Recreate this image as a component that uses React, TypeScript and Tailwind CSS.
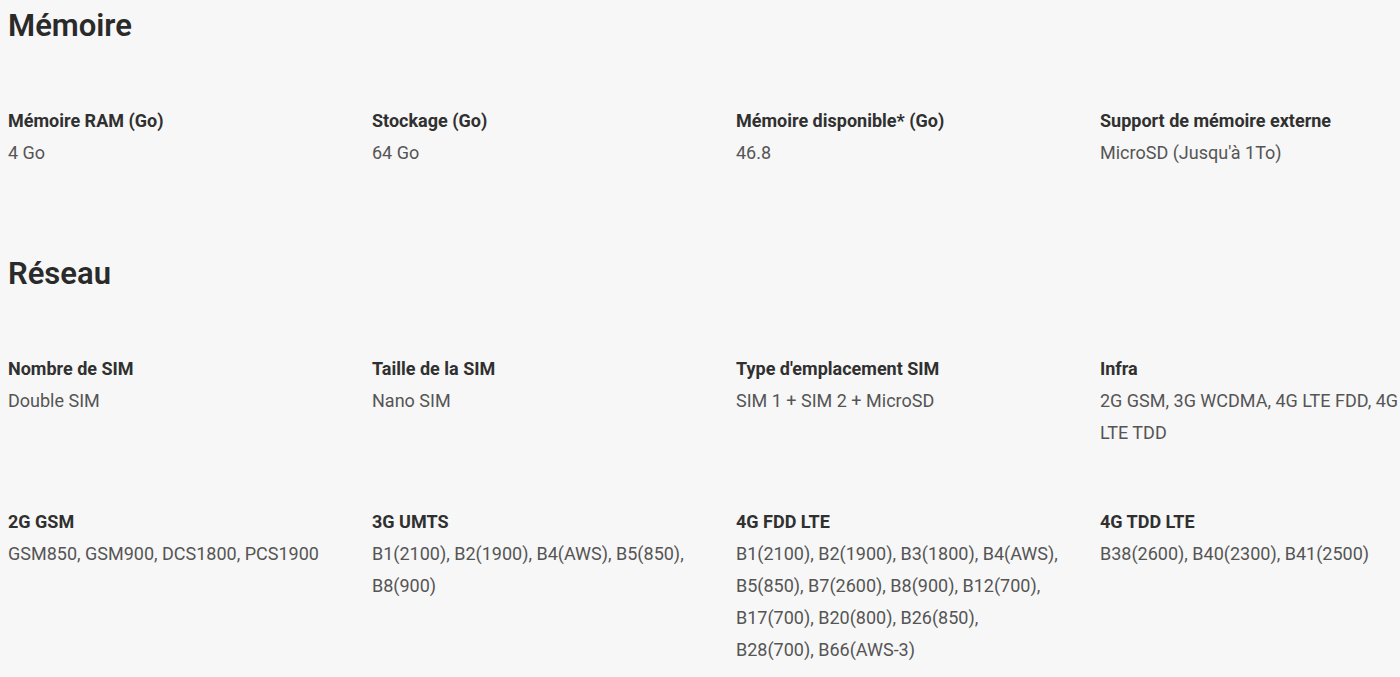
import React from "react";

type Spec = { label: string; value: string };

const memoire: Spec[] = [
  { label: "Mémoire RAM (Go)", value: "4 Go" },
  { label: "Stockage (Go)", value: "64 Go" },
  { label: "Mémoire disponible* (Go)", value: "46.8" },
  { label: "Support de mémoire externe", value: "MicroSD (Jusqu'à 1To)" },
];

const reseau: Spec[] = [
  { label: "Nombre de SIM", value: "Double SIM" },
  { label: "Taille de la SIM", value: "Nano SIM" },
  { label: "Type d'emplacement SIM", value: "SIM 1 + SIM 2 + MicroSD" },
  { label: "Infra", value: "2G GSM, 3G WCDMA, 4G LTE FDD, 4G LTE TDD" },
  { label: "2G GSM", value: "GSM850, GSM900, DCS1800, PCS1900" },
  { label: "3G UMTS", value: "B1(2100), B2(1900), B4(AWS), B5(850), B8(900)" },
  {
    label: "4G FDD LTE",
    value:
      "B1(2100), B2(1900), B3(1800), B4(AWS), B5(850), B7(2600), B8(900), B12(700), B17(700), B20(800), B26(850), B28(700), B66(AWS-3)",
  },
  { label: "4G TDD LTE", value: "B38(2600), B40(2300), B41(2500)" },
];

function Section({ title, specs }: { title: string; specs: Spec[] }) {
  return (
    <section>
      <h2 className="text-[31px] leading-[36px] font-semibold text-[#2a2a2a] mb-[61px]">
        {title}
      </h2>
      <div className="grid grid-cols-[repeat(4,364px)] gap-y-[57px]">
        {specs.map((spec) => (
          <div key={spec.label} className="pr-[41px] text-[18px] leading-[32px]">
            <h3 className="font-bold text-[#303030]">{spec.label}</h3>
            <p className="text-[#555555]">{spec.value}</p>
          </div>
        ))}
      </div>
    </section>
  );
}

export default function App() {
  return (
    <div
      className="min-h-screen w-[1400px] h-[677px] overflow-hidden bg-[#f7f7f7] pl-2 pt-2"
      style={{ fontFamily: "Roboto, 'Liberation Sans', sans-serif" }}
    >
      <div className="flex flex-col gap-[87px]">
        <Section title="Mémoire" specs={memoire} />
        <Section title="Réseau" specs={reseau} />
      </div>
    </div>
  );
}
